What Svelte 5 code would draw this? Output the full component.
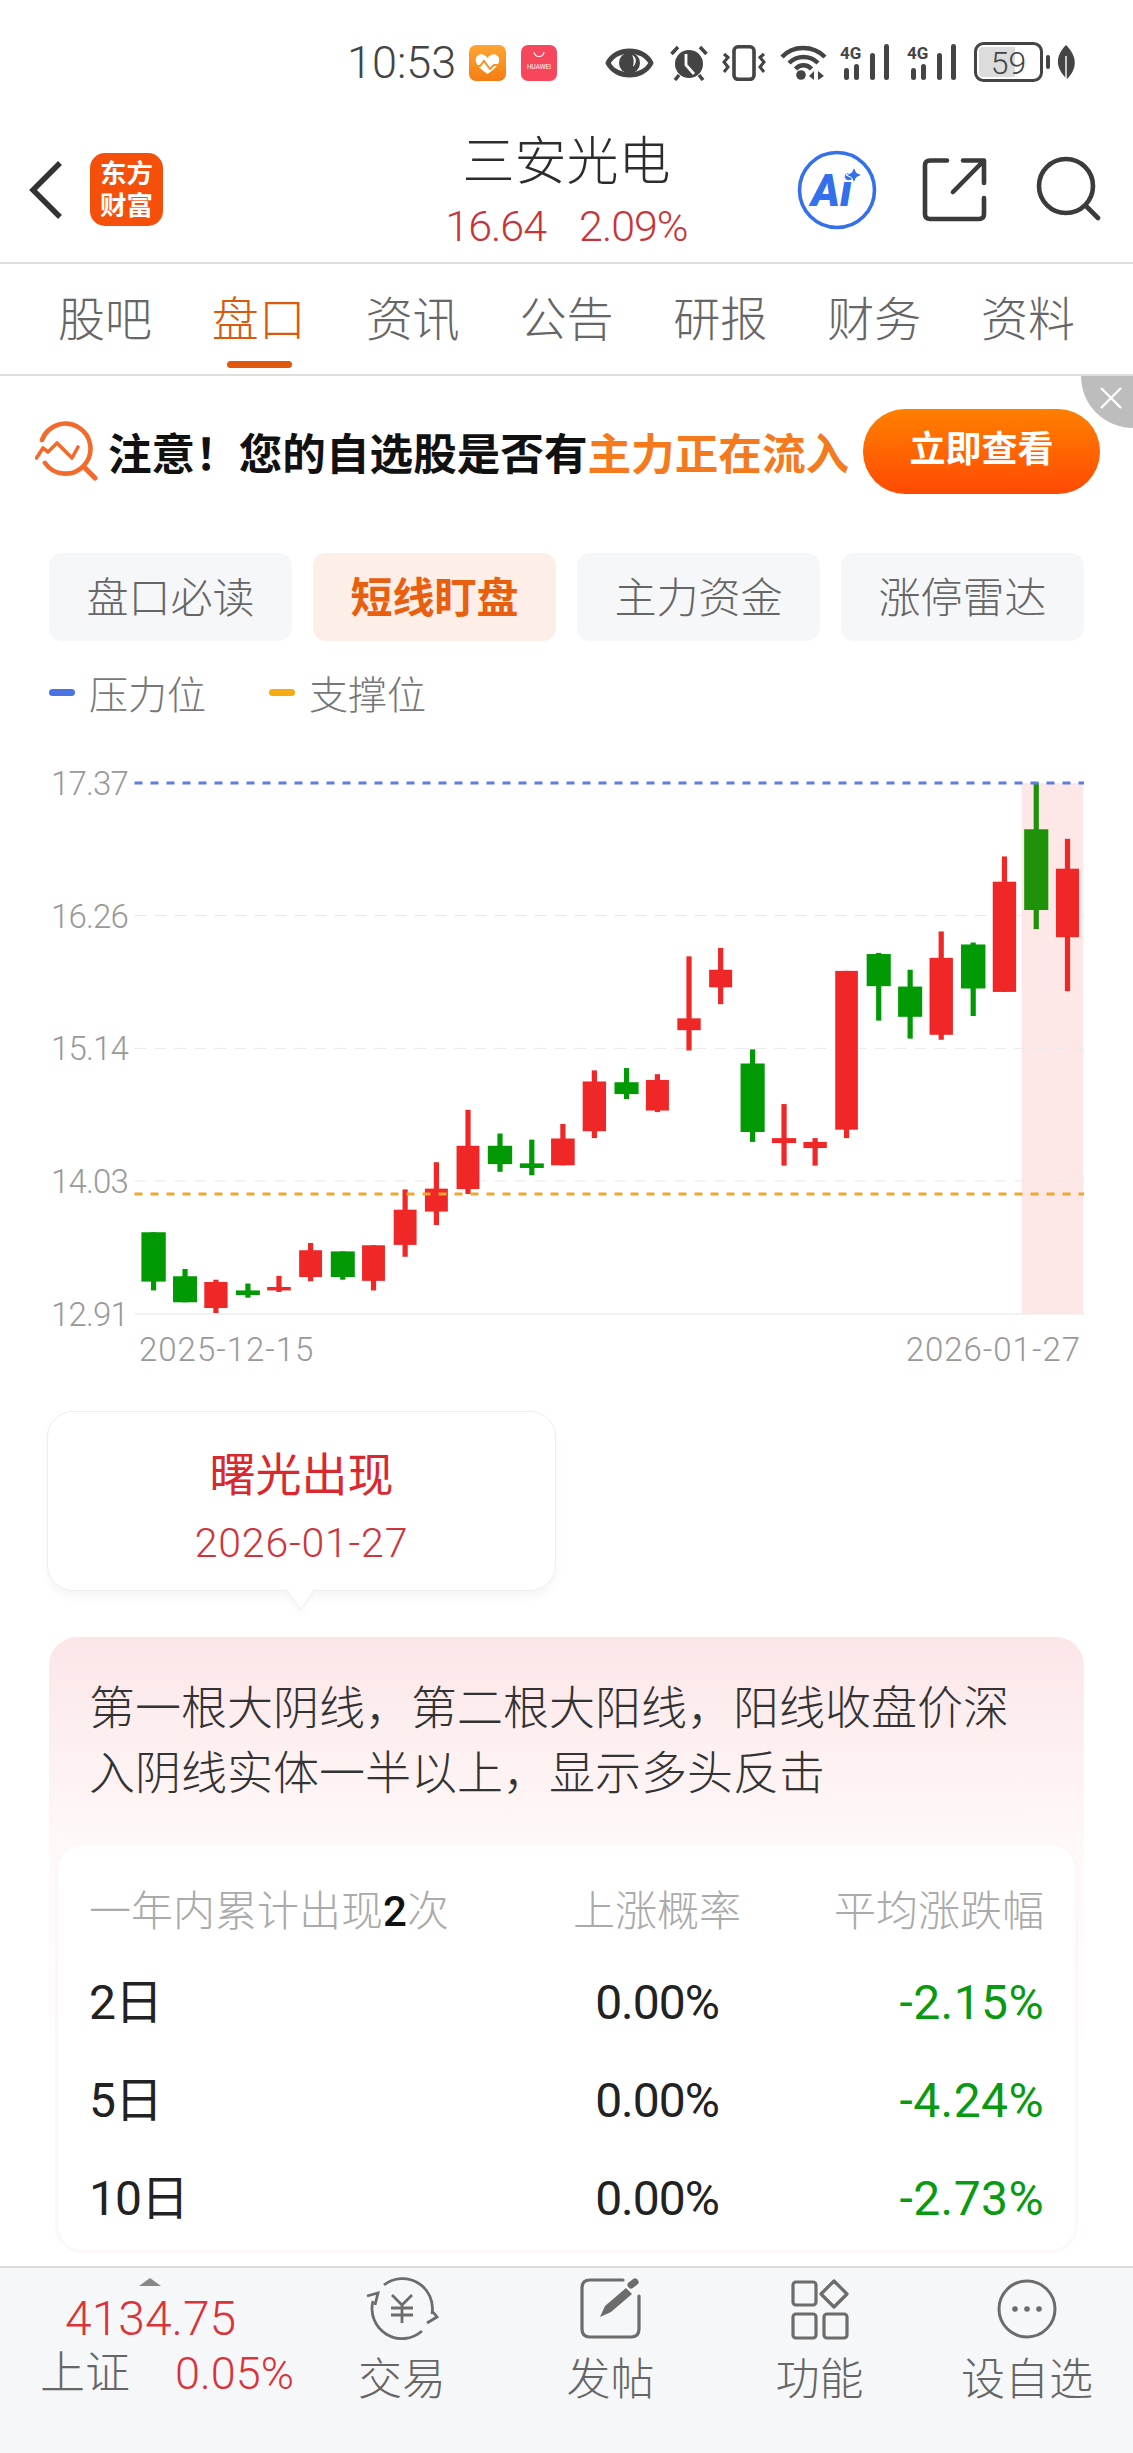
<script>
  const tabs = ['股吧', '盘口', '资讯', '公告', '研报', '财务', '资料'];
  const pills = ['盘口必读', '短线盯盘', '主力资金', '涨停雷达'];
  const rows = [
    { d: '2日', p: '0.00%', a: '-2.15%' },
    { d: '5日', p: '0.00%', a: '-4.24%' },
    { d: '10日', p: '0.00%', a: '-2.73%' }
  ];
  const axis = [
    { t: '17.37', y: 23 }, { t: '16.26', y: 155.5 }, { t: '15.14', y: 288.4 }, { t: '14.03', y: 421 }, { t: '12.91', y: 554 }
  ];
  const Y = (v) => v / 2.613;
  const raw = [
    [0,389,456,1234,1363,1234,1386],[0,476,542,1349,1417,1330,1417],[1,562,626,1364,1432,1358,1445],
    [0,649,715,1386,1398,1368,1405],[1,735,800,1377,1386,1348,1390],[1,823,886,1281,1351,1262,1362],
    [0,910,976,1284,1351,1284,1358],[1,996,1059,1268,1361,1268,1386],[1,1083,1146,1175,1267,1122,1298],
    [1,1169,1232,1120,1180,1051,1215],[1,1256,1319,1008,1121,914,1134],[0,1342,1409,1008,1056,976,1076],
    [0,1430,1496,1054,1066,992,1085],[1,1516,1581,989,1059,951,1059]
  ].map((c) => [c[0], c[1] / 2.751, c[2] / 2.751, c[3], c[4], c[5], c[6]]);
  const raw2 = [
    [1,62,126,840,970,811,988],[0,149,215,842,873,805,886],[1,235,298,836,916,821,920],
    [1,321,385,675,706,513,759],[1,408,471,548,594,491,638],[0,494,560,793,972,756,998],
    [1,580,646,988,1001,899,1060],[1,666,730,998,1014,988,1060],[1,753,815,551,966,551,988],
    [0,839,905,507,591,504,681],[0,925,991,592,671,548,728],[1,1011,1075,517,718,448,731],
    [0,1097,1164,482,597,477,669],[1,1184,1248,318,606,252,606],[2,1270,1336,181,392,60,442],
    [1,1357,1420,284,463,206,604]
  ].map((c) => [c[0], 560 + c[1] / 2.736, 560 + c[2] / 2.736, c[3], c[4], c[5], c[6]]);
  const candles = [...raw, ...raw2].map((c) => ({
    color: c[0] === 1 ? '#ef2727' : c[0] === 2 ? '#1f920a' : '#029a04',
    x: c[1], w: c[2] - c[1], top: Y(c[3]), h: Y(c[4] - c[3]), wt: Y(c[5]), wb: Y(c[6]), cx: (c[1] + c[2]) / 2
  }));
</script>

<div class="page">
  <div class="main">
    <div class="status">
      <span class="time">10:53</span>
      <svg class="ico" width="37" height="36" viewBox="0 0 37 36">
        <defs><linearGradient id="hg" x1="0" y1="0" x2="0" y2="1"><stop offset="0" stop-color="#ffa534"/><stop offset="1" stop-color="#f37d12"/></linearGradient></defs>
        <rect width="37" height="36" rx="7" fill="url(#hg)"/>
        <path d="M18.5 29 C8 22 6 17 7 13 C9 8 15 8 18.5 13 C22 8 28 8 30 13 C31 17 29 22 18.5 29Z" fill="#fff"/>
        <path d="M0 21 H11 L15 16 L21 24 L25 20 H37" fill="none" stroke="#f59324" stroke-width="2"/>
      </svg>
      <svg class="ico huawei" width="36" height="36" viewBox="0 0 36 36">
        <rect width="36" height="36" rx="7" fill="#f7475c"/>
        <path d="M13 7 C14 13 22 13 23 7" fill="none" stroke="#fff" stroke-width="1.2"/>
        <text x="18" y="24" text-anchor="middle" class="hw">HUAWEI</text>
      </svg>
      <svg class="ico eye" width="49" height="34" viewBox="0 0 49 34">
        <path d="M3 17 C11 1 38 1 46 17 C38 33 11 33 3 17Z" fill="none" stroke="#444" stroke-width="5" stroke-linejoin="round"/>
        <circle cx="24.5" cy="17" r="10.5" fill="#444"/>
        <path d="M27 9 C32 11 32 17 28 21 C29 16 29 12 27 9Z" fill="#fff"/>
      </svg>
      <svg class="ico alarm" width="38" height="36" viewBox="0 0 38 36">
        <circle cx="19" cy="19" r="14" fill="#444"/>
        <path d="M1.5 9 L8 2 M36.5 9 L30 2 M9 30 L5 35 M29 30 L33 35" stroke="#444" stroke-width="3.5" fill="none"/>
        <path d="M16 9 V20 L24 29" fill="none" stroke="#fff" stroke-width="2.8"/>
      </svg>
      <svg class="ico vib" width="44" height="36" viewBox="0 0 44 36">
        <rect x="12" y="1.8" width="20" height="32.5" rx="4" fill="none" stroke="#444" stroke-width="3.6"/>
        <path d="M2 9 L6 12.5 L2 17 L6 22 L2 27 M42 9 L38 12.5 L42 17 L38 22 L42 27" fill="none" stroke="#444" stroke-width="3"/>
      </svg>
      <svg class="ico wifi" width="47" height="36" viewBox="0 0 47 36">
        <path d="M2 13 C13 1 33 1 45 13 M9 19 C17 11 30 11 38 19 M15.5 25 C20 20 27 20 31.5 25" fill="none" stroke="#444" stroke-width="4.4"/>
        <circle cx="21" cy="31" r="4.8" fill="#444"/>
        <path d="M34 27 V36 L29 32Z M38 27 V36 L44 32Z" fill="#444"/>
      </svg>
      <svg class="ico sig" width="52" height="36" viewBox="0 0 52 36">
        <text x="0" y="15" class="g4">4G</text>
        <rect x="4" y="24" width="5" height="12" rx="2.5" fill="#444"/>
        <rect x="14" y="20" width="5" height="16" rx="2.5" fill="#444"/>
        <rect x="30" y="9" width="5" height="27" rx="2.5" fill="#444"/>
        <rect x="44" y="0" width="5" height="36" rx="2.5" fill="#444"/>
      </svg>
      <svg class="ico sig2" width="52" height="36" viewBox="0 0 52 36">
        <text x="0" y="15" class="g4">4G</text>
        <rect x="4" y="24" width="5" height="12" rx="2.5" fill="#444"/>
        <rect x="14" y="20" width="5" height="16" rx="2.5" fill="#444"/>
        <rect x="30" y="9" width="5" height="27" rx="2.5" fill="#444"/>
        <rect x="44" y="0" width="5" height="36" rx="2.5" fill="#444"/>
      </svg>
      <svg class="ico batt" width="104" height="40" viewBox="0 0 104 40">
        <rect x="1.5" y="1.5" width="66" height="37" rx="8" fill="#fff" stroke="#444" stroke-width="3"/>
        <path d="M5 9 Q5 5 9 5 H41 V35 H9 Q5 35 5 31Z" fill="#dcdcdc"/>
        <text x="34.5" y="31.5" text-anchor="middle" class="bt">59</text>
        <rect x="72" y="13" width="4" height="14" rx="2" fill="#444"/>
        <path d="M92 3 C103 14 104 26 93 37 C81 26 81 14 92 3Z" fill="#444"/>
        <path d="M92 14 V37" stroke="#fff" stroke-width="1.4"/>
      </svg>
    </div>

    <header class="head">
      <div class="head-left">
        <svg class="back" width="36" height="60" viewBox="0 0 36 60"><path d="M32 3 L5 30 L32 57" fill="none" stroke="#333" stroke-width="5.5"/></svg>
        <div class="logo"><span>东方</span><span>财富</span></div>
      </div>
      <div class="head-mid">
        <div class="name">三安光电</div>
        <div class="quote"><span>16.64</span><span>2.09%</span></div>
      </div>
      <div class="head-right">
        <svg class="aiico" width="82" height="82" viewBox="0 0 82 82">
          <circle cx="41" cy="41" r="37.5" fill="none" stroke="#3470ec" stroke-width="3.6"/>
          <text x="15" y="57" class="ai">Ai</text>
          <path d="M58 18 L60.5 23.5 L66 26 L60.5 28.5 L58 34 L55.5 28.5 L50 26 L55.5 23.5Z" fill="#3470ec" stroke="#fff" stroke-width="1"/>
        </svg>
        <svg class="share" width="66" height="66" viewBox="0 0 66 66">
          <path d="M25 3.5 H8 Q3 3.5 3 8 V57 Q3 62 8 62 H57 Q62 62 62 57 V41" fill="none" stroke="#3b3b3b" stroke-width="4.6" stroke-linecap="round"/>
          <path d="M41 3.5 H62 V26 M61 4.5 L31 35" fill="none" stroke="#3b3b3b" stroke-width="4.6" stroke-linecap="round" stroke-linejoin="round"/>
        </svg>
        <svg class="search" width="66" height="66" viewBox="0 0 66 66">
          <circle cx="31" cy="30" r="27" fill="none" stroke="#3b3b3b" stroke-width="4.6"/>
          <path d="M51 50 L63 62" stroke="#3b3b3b" stroke-width="4.6" stroke-linecap="round"/>
        </svg>
      </div>
    </header>

    <nav class="tabs">
      {#each tabs as t, i}
        <div class="tab" class:on={i === 1}>{t}</div>
      {/each}
    </nav>

    <section class="banner">
      <div class="close">
        <svg width="26" height="26" viewBox="0 0 26 26"><path d="M3 3 L23 23 M23 3 L3 23" stroke="#fff" stroke-width="2.4"/></svg>
      </div>
      <svg width="64" height="60" viewBox="0 0 64 60">
        <path d="M7 19 A25 25 0 1 1 10 42" fill="none" stroke="#f26a2c" stroke-width="4.6" stroke-linecap="round"/>
        <path d="M1.5 37 L8 27 L13 31 L22 22 L37 37 L43 26" fill="none" stroke="#f26a2c" stroke-width="3.6" stroke-linejoin="round" stroke-linecap="round"/>
        <path d="M50 47 L60 57" stroke="#f26a2c" stroke-width="5" stroke-linecap="round"/>
      </svg>
      <div class="ban-text">注意！您的自选股是否有<em>主力正在流入</em></div>
      <div class="ban-btn">立即查看</div>
    </section>

    <div class="pills">
      {#each pills as p, i}
        <div class="pill" class:on={i === 1}>{p}</div>
      {/each}
    </div>

    <div class="legend">
      <span class="lg"><i class="blue"></i>压力位</span>
      <span class="lg"><i class="orange"></i>支撑位</span>
    </div>

    <svg class="chart" width="1133" height="620" viewBox="0 0 1133 620">
      <rect x="1021.6" y="23" width="61.8" height="531" fill="#fde8e7"/>
      {#each axis as a, i}
        <text x="51" y={a.y + 12} class="ax">{a.t}</text>
        {#if i === 4}
          <line x1="134.5" x2="1084" y1={a.y} y2={a.y} stroke="#eeeeee" stroke-width="1.5"/>
        {:else if i > 0}
          <line x1="134.5" x2="1084" y1={a.y} y2={a.y} stroke="#e9e9e9" stroke-width="1" stroke-dasharray="12 8"/>
        {/if}
      {/each}
      {#each candles as c}
        <rect x={c.cx - 2.6} y={c.wt} width="5.2" height={c.wb - c.wt} fill={c.color}/>
        <rect x={c.x} y={c.top} width={c.w} height={c.h} fill={c.color}/>
      {/each}
      <line x1="134.5" x2="1084" y1="23" y2="23" stroke="#5b7fdc" stroke-width="3" stroke-dasharray="8 8"/>
      <line x1="134.5" x2="1084" y1="434" y2="434" stroke="#f0a72c" stroke-width="3" stroke-dasharray="8 8"/>
      <text x="139" y="601" class="dt">2025-12-15</text>
      <text x="1081" y="601" class="dt" text-anchor="end">2026-01-27</text>
    </svg>

    <div class="bubble">
      <div class="b-title">曙光出现</div>
      <div class="b-date">2026-01-27</div>
      <span class="tail"></span>
    </div>

    <section class="panel">
      <p class="desc">第一根大阴线，第二根大阳线，阳线收盘价深入阴线实体一半以上，显示多头反击</p>
      <div class="card">
        <div class="th first">一年内累计出现<b>2</b>次</div>
        <div class="th mid">上涨概率</div>
        <div class="th end">平均涨跌幅</div>
        {#each rows as r}
          <div class="td first">{r.d}</div>
          <div class="td mid">{r.p}</div>
          <div class="td end down">{r.a}</div>
        {/each}
      </div>
    </section>
  </div>

  <footer class="foot">
    <div class="idx">
      <span class="tri"></span>
      <div class="idx-val">4134.75</div>
      <div class="idx-row"><span>上证</span><em>0.05%</em></div>
    </div>
    <div class="fi trade">
      <svg width="74" height="64" viewBox="0 0 74 64">
        <g fill="none" stroke="#6c6c6c" stroke-width="2.8">
          <path d="M19 9 A30 30 0 0 1 67 38"/>
          <path d="M62 47 L72 41 L68 36"/>
          <path d="M57 55 A30 30 0 0 1 8 25"/>
          <path d="M2 20 L13 17 L10 29"/>
          <path d="M27 19 L37 29 L47 19 M26 32 H48 M26 39 H48 M37 29 V47"/>
        </g>
      </svg>
      <span>交易</span>
    </div>
    <div class="fi post">
      <svg width="64" height="64" viewBox="0 0 64 64">
        <path d="M44 4 H11 Q3 4 3 12 V53 Q3 61 11 61 H52 Q60 61 60 53 V20" fill="none" stroke="#6c6c6c" stroke-width="3.2" stroke-linecap="round"/>
        <path d="M21 41 L26 30 L47 12 L53 18 L32 36Z" fill="#6c6c6c"/>
        <path d="M52 9 L56 6" stroke="#6c6c6c" stroke-width="7" stroke-linecap="round"/>
      </svg>
      <span>发帖</span>
    </div>
    <div class="fi func">
      <svg width="58" height="64" viewBox="0 -4 58 64">
        <g fill="none" stroke="#6c6c6c" stroke-width="3.2">
          <rect x="2" y="2" width="23" height="23" rx="3"/>
          <path d="M43 1 L56 14 L43 27 L30 14Z" stroke-linejoin="round"/>
          <rect x="2" y="34" width="23" height="24" rx="3"/>
          <rect x="33" y="34" width="23" height="24" rx="3"/>
        </g>
      </svg>
      <span>功能</span>
    </div>
    <div class="fi more">
      <svg width="60" height="64" viewBox="0 -2 60 64">
        <circle cx="30" cy="31" r="28" fill="none" stroke="#6c6c6c" stroke-width="3"/>
        <circle cx="18" cy="31" r="2.8" fill="#6c6c6c"/><circle cx="30" cy="31" r="2.8" fill="#6c6c6c"/><circle cx="42" cy="31" r="2.8" fill="#6c6c6c"/>
      </svg>
      <span>设自选</span>
    </div>
  </footer>
</div>

<style>
  :global(body) { margin: 0; background: #fff; }
  .page {
    width: 1133px; height: 2453px; display: flex; flex-direction: column; overflow: hidden;
    font-family: Roboto, "Noto Sans CJK SC", sans-serif; background: #fff; color: #333;
  }
  .main { height: 2266px; overflow: hidden; flex: none; }
  em { font-style: normal; }

  .status { height: 124px; display: flex; align-items: flex-start; box-sizing: border-box; padding: 0 0 0 347px; position: relative; }
  .time { font-size: 45px; font-weight: 300; color: #444; line-height: 1; margin-top: 40px; width: 122px; }
  .ico { flex: none; margin-top: 45px; }
  .huawei { margin-left: 15px; }
  .eye { margin-left: 48px; margin-top: 46px; }
  .alarm { margin-left: 16px; }
  .vib { margin-left: 14px; }
  .wifi { margin-left: 14px; margin-top: 44px; }
  .sig { margin-left: 13px; margin-top: 44px; }
  .sig2 { margin-left: 15px; margin-top: 44px; }
  .batt { margin-left: 15px; margin-top: 42px; }
  .hw { font-size: 6.5px; fill: #fff; font-family: Roboto, sans-serif; }
  .g4 { font-size: 17px; font-weight: 700; fill: #444; font-family: Roboto, sans-serif; }
  .bt { font-size: 32px; font-weight: 300; fill: #444; font-family: Roboto, sans-serif; }

  .head { height: 138px; display: grid; grid-template-columns: 1fr auto 1fr; box-sizing: border-box; }
  .head-left { display: flex; align-items: flex-start; padding: 36px 0 0 28px; }
  .logo {
    width: 73px; height: 73px; margin: -7px 0 0 26px; background: #f5500b; border-radius: 15px; color: #fff; font-weight: 700;
    font-size: 26.5px; line-height: 32px; display: flex; flex-direction: column; align-items: center; justify-content: center;
  }
  .head-mid { text-align: center; padding-top: 9px; }
  .name { font-size: 52px; line-height: 60px; color: #2c2c2c; font-weight: 300; }
  .quote { font-size: 43px; letter-spacing: -1px; line-height: 50px; font-weight: 300; color: #c9343a; display: flex; gap: 33px; justify-content: center; margin-top: 8px; }
  .head-right { display: flex; align-items: flex-start; justify-content: flex-end; padding: 23px 32px 0 0; }
  .aiico { margin-top: 2px; }
  .ai { font-size: 44px; font-weight: 900; font-style: italic; fill: #3470ec; font-family: Roboto, sans-serif; }
  .share { margin: 10px 0 0 44px; }
  .search { margin: 9px 0 0 47px; }

  .tabs {
    height: 114px; box-sizing: border-box; border-top: 2px solid #dedede; border-bottom: 2px solid #dedede;
    padding: 0 28px; display: grid; grid-template-columns: repeat(7, 1fr);
  }
  .tab { font-size: 47px; font-weight: 300; color: #666; text-align: center; line-height: 112px; position: relative; }
  .tab.on { color: #d9590e; }
  .tab.on::after {
    content: ''; position: absolute; left: 50%; margin-left: -32px; bottom: 8px; width: 65px; height: 7px; border-radius: 4px; background: #e0570e;
  }

  .banner { height: 177px; box-sizing: border-box; padding: 33px 33px 0 35px; display: flex; align-items: flex-start; position: relative; }
  .banner > svg { margin-top: 12px; flex: none; }
  .close {
    position: absolute; right: 0; top: 0; width: 52px; height: 52px; background: #bdbdbd; border-bottom-left-radius: 52px;
    display: flex; align-items: center; justify-content: center;
  }
  .close svg { margin: -8px 0 0 8px; }
  .ban-text { font-size: 43.6px; font-weight: 700; color: #111; line-height: 94px; margin-left: 9px; white-space: nowrap; }
  .ban-text em { color: #f47a1d; }
  .ban-btn {
    margin-left: auto; width: 237px; height: 85px; border-radius: 42px; background: linear-gradient(#ff8000, #ff4a04); color: #fff;
    font-size: 36px; font-weight: 700; text-align: center; line-height: 83px; flex: none;
  }

  .pills { display: grid; grid-template-columns: repeat(4, 243px); gap: 21px; padding-left: 49px; height: 88px; }
  .pill { border-radius: 13px; background: #f6f7f9; color: #666; font-size: 42px; font-weight: 300; text-align: center; line-height: 91px; height: 88px; }
  .pill.on { background: #fdeee8; color: #e8600f; font-weight: 700; }

  .legend { height: 119px; display: flex; padding-left: 49px; gap: 63px; color: #777; font-size: 39px; font-weight: 300; }
  .lg { display: flex; align-items: center; height: 102px; }
  .lg i { width: 26px; height: 7px; border-radius: 4px; margin-right: 14px; }
  .blue { background: #4a72e0; }
  .orange { background: #f6ab14; }

  .chart { display: block; height: 620px; }
  .ax { font-size: 33px; font-weight: 300; fill: #999; font-family: Roboto, sans-serif; letter-spacing: -0.8px; }
  .dt { font-size: 33px; font-weight: 300; fill: #999; font-family: Roboto, sans-serif; letter-spacing: 1px; }

  .bubble {
    margin: 31px 0 0 47px; width: 509px; height: 180px; box-sizing: border-box; border: 1px solid #eeeeee; border-radius: 26px;
    background: #fff; box-shadow: 0 6px 10px rgba(0, 0, 0, 0.04); text-align: center; position: relative;
  }
  .b-title { font-size: 46px; line-height: 50px; margin-top: 38px; color: #d9282e; display: inline-block; width: 100%; }
  .b-date { font-size: 41px; letter-spacing: 0.8px; font-weight: 300; line-height: 44px; margin-top: 21px; color: #cf343a; }
  .tail {
    position: absolute; left: 240px; bottom: -12px; width: 24px; height: 24px; background: #fff; transform: rotate(45deg) skew(10deg, 10deg);
    border-right: 1px solid #eee; border-bottom: 1px solid #eee; box-shadow: 4px 4px 6px rgba(0, 0, 0, 0.02);
  }

  .panel {
    margin: 46px 49px 0; height: 629px; box-sizing: border-box; border-radius: 28px 28px 0 0; padding: 39px 6px 0;
    background: linear-gradient(#fbe6e8 0, #fff8f8 200px, #fff 420px);
  }
  .desc { margin: 0 33px 0 34px; font-size: 46px; line-height: 65px; color: #333; font-weight: 300; height: 166px; }
  .card {
    height: 411px; box-sizing: border-box; background: #fff; border: 3px solid #fef7f7; border-radius: 28px; padding: 37px 31px 0;
    display: grid; grid-template-columns: 1fr 244px 265px; grid-template-rows: 60px 98px 98px 98px; align-content: start;
  }
  .th { font-size: 42px; font-weight: 300; color: #aaa; line-height: 60px; }
  .th b { color: #111; font-weight: 500; }
  .td { font-size: 48px; letter-spacing: -1px; color: #222; line-height: 98px; position: relative; top: 12px; }
  .first { text-align: left; }
  .mid { text-align: center; }
  .end { text-align: right; }
  .td.down { color: #0a9a12; letter-spacing: 0.4px; }

  .foot {
    flex: 1; box-sizing: border-box; background: #f6f7f9; border-top: 2px solid #dcdcdc; display: flex; position: relative;
    color: #666; font-weight: 300;
  }
  .idx { width: 296px; flex: none; padding-left: 40px; box-sizing: border-box; position: relative; }
  .tri { position: absolute; left: 139px; top: 10px; border-left: 11px solid transparent; border-right: 11px solid transparent; border-bottom: 8px solid #888; }
  .idx-val { font-size: 48px; color: #d9343a; line-height: 50px; margin: 26px 0 0 25px; }
  .idx-row { font-size: 45px; display: flex; align-items: center; line-height: 50px; margin-top: 5px; }
  .idx-row em { color: #d9343a; margin-left: 45px; }
  .fi { flex: none; display: flex; flex-direction: column; align-items: center; width: 208px; padding-top: 8px; box-sizing: border-box; }
  .fi span { font-size: 44px; line-height: 50px; margin-top: 15px; }
  .trade { margin-left: 2px; }
  .post, .func { width: 209px; }
  .more { width: 206px; }
</style>
